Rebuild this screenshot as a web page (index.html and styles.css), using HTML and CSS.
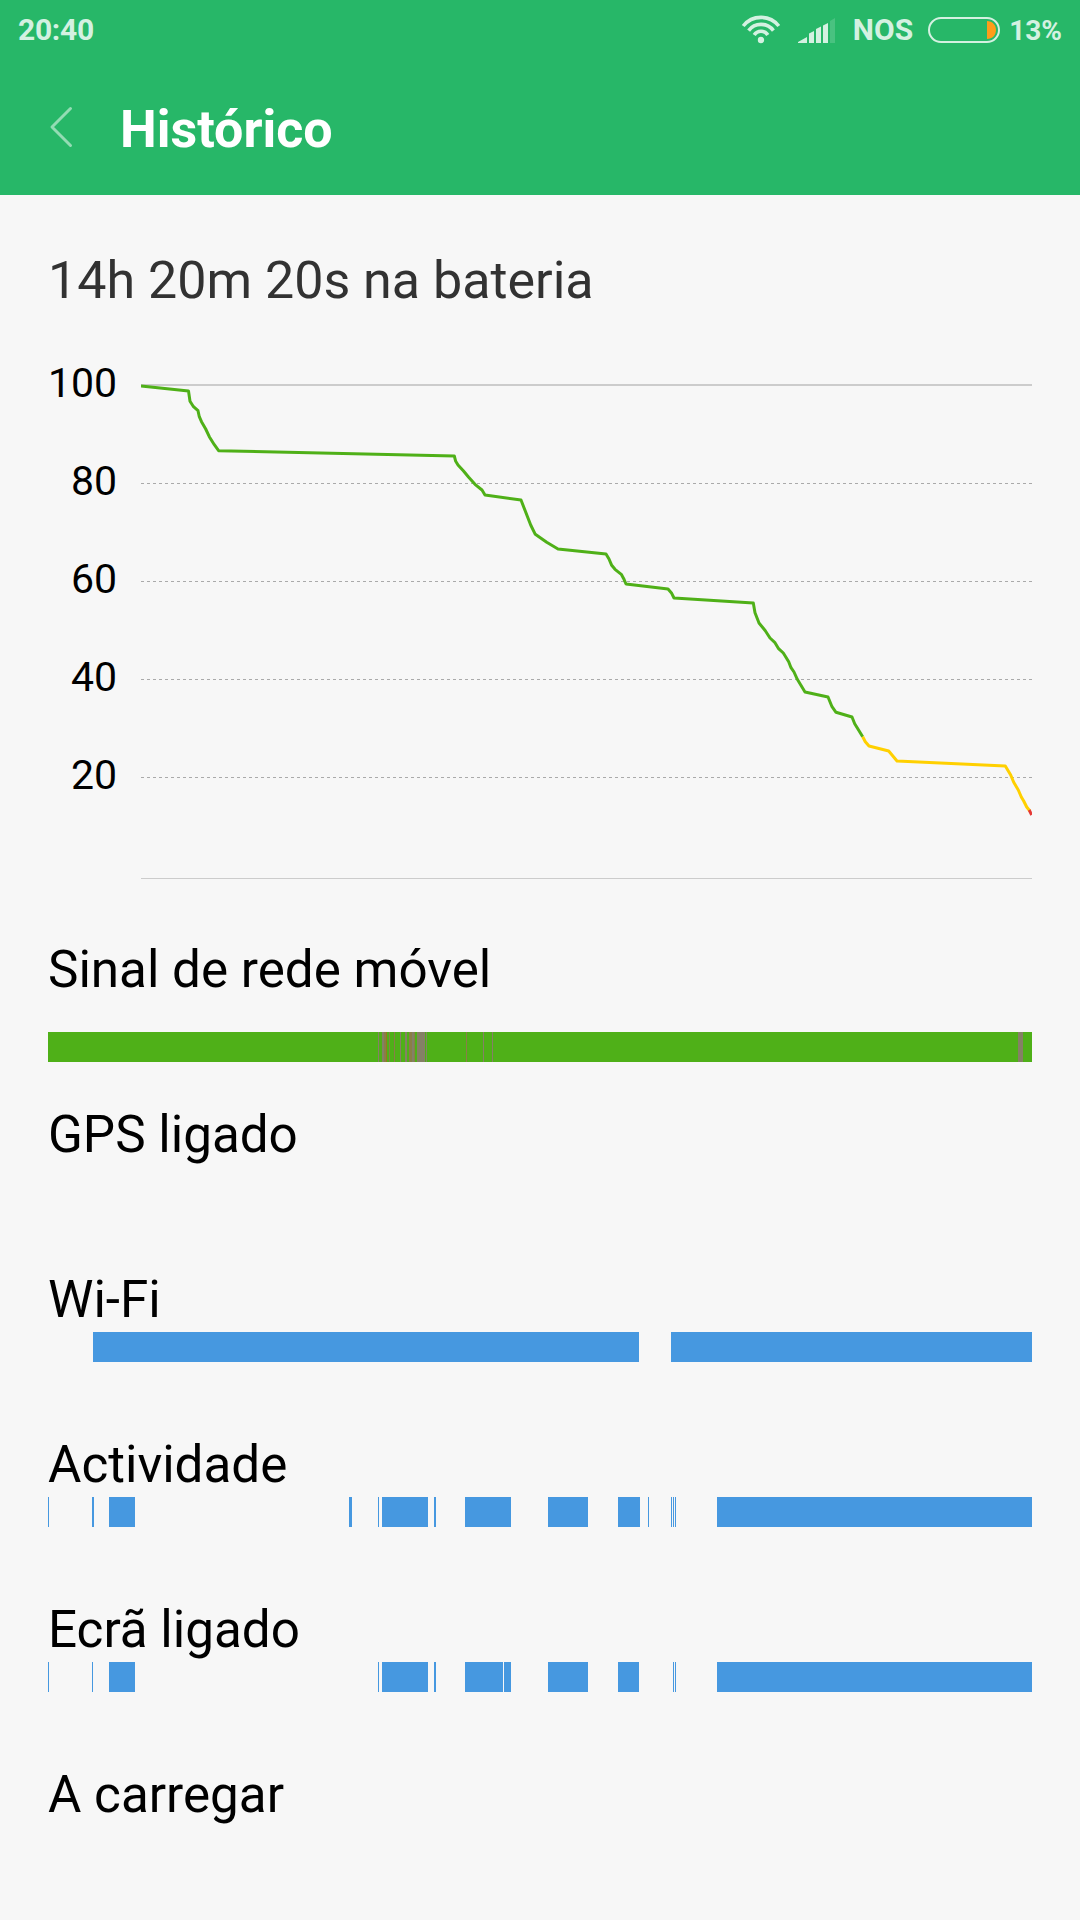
FILE: index.html
```html
<!DOCTYPE html>
<html lang="pt">
<head>
<meta charset="utf-8">
<title>Histórico</title>
<link rel="stylesheet" href="styles.css">
</head>
<body>
<header class="header">
  <div class="status">
    <span class="clock">20:40</span>
    <svg class="wifi" width="40" height="29" viewBox="0 0 40 29" fill="none" stroke="currentColor" stroke-width="3.6">
      <circle cx="20" cy="25" r="3.2" fill="currentColor" stroke="none"/>
      <path d="M13.200 20a8 8 0 0 1 13.600 0M7.600 15.600a15.500 15.500 0 0 1 24.800 0M2.200 11a22.600 22.600 0 0 1 35.600 0"/>
    </svg>
    <svg class="signal" width="37" height="26" viewBox="0 0 37 26" fill="currentColor">
      <path d="M0 25v-1l9-5v6zM11 25V15.500l5-2.500v12zM18 25V11l5-2.500V25zM25 25V7.500L30 5v20z"/>
      <path opacity=".2" d="M32 25V3l5-3v25z"/>
    </svg>
    <span class="carrier">NOS</span>
    <svg class="battery" width="72" height="26" viewBox="0 0 72 26">
      <rect x="1" y="1" width="70" height="24" rx="12" fill="none" stroke="currentColor" stroke-width="2"/>
      <path d="M59 4c5.500 0 9 4 9 9s-3.500 9-9 9z" fill="#ff9c1a"/>
    </svg>
    <span class="percent">13%</span>
  </div>
  <div class="titlebar">
    <svg class="back" width="24" height="42" viewBox="0 0 24 42"><path d="M21.500 2.500L3 21l18.500 18.500" fill="none" stroke="currentColor" stroke-width="3" stroke-linecap="round" stroke-linejoin="round"/></svg>
    <h1 class="title">Histórico</h1>
  </div>
</header>
<main class="content">
  <h2 class="summary">14h 20m 20s na bateria</h2>
  <section class="chart">
    <div class="axis"><span>100</span><span>80</span><span>60</span><span>40</span><span>20</span></div>
    <svg class="plot" width="891" height="500" viewBox="141 382 891 500">
      <path class="grid-top" d="M141 385H1032"/>
      <path class="grid-dash" d="M141 483.500H1032M141 581.500H1032M141 679.500H1032M141 777.500H1032"/>
      <path class="grid-base" d="M141 878.500H1032"/>
      <polyline class="line high" points="141,386 188.500,391 190,401.300 193.500,406.700 198,410.700 199.300,416.700 201.500,421.700 205.700,429 209.300,436.700 214.300,444.700 218.600,450.700 454.300,456 455.700,461.300 458,465 463.300,470.700 468.700,477.300 475,484.300 482,490 485,495 521,500 530.700,525 535.300,534.300 546.700,542.300 558,549 606,554 609,559 611.700,565.300 615,569.300 621.300,574.300 623.700,578.700 626,584 668,589 671.700,593.300 674,598 753.300,603 755,612.700 759,623 765.300,630.700 770,638 774.700,642.300 778.300,648.300 783.300,653 788.700,661.700 791,667.700 794,672 797.300,679.300 805,692 828,697 832,706.700 836,712.300 852,717 854.700,723.700 862.700,736.700"/>
      <polyline class="line mid" points="862.700,736.700 865.300,741.700 869,746 888.700,751 897,761 1005.300,766 1010.700,775 1013.700,782.300 1018.300,790 1021.300,797 1023.700,801 1026.700,807 1029.700,810.700"/>
      <polyline class="line low" points="1029.200,810 1031.700,815"/>
    </svg>
  </section>
  <section class="row">
    <h3 class="label">Sinal de rede móvel</h3>
    <svg class="bar bar-signal" width="984" height="30" viewBox="48 0 984 30" shape-rendering="crispEdges">
      <path class="good" d="M48 0H1032V30H48z"/>
      <path class="weak" d="M378 0h1v30h-1zM382 0h2v30h-2zM400 0h1v30h-1zM405 0h2v30h-2zM412 0h2v30h-2zM417 0h8v30h-8zM426 0h1v30h-1zM483 0h1v30h-1zM492 0h1v30h-1zM1018 0h5v30h-5z"/>
      <path class="fair" d="M384 0h2v30h-2zM389 0h1v30h-1zM394 0h1v30h-1zM409 0h3v30h-3zM414 0h1v30h-1zM466 0h1v30h-1z"/>
      <path class="poor" d="M386 0h1v30h-1z"/>
    </svg>
  </section>
  <section class="row"><h3 class="label">GPS ligado</h3></section>
  <section class="row">
    <h3 class="label">Wi-Fi</h3>
    <svg class="bar" width="984" height="30" viewBox="48 0 984 30" shape-rendering="crispEdges"><path d="M93 0H639V30H93zM671 0H1032V30H671z"/></svg>
  </section>
  <section class="row">
    <h3 class="label">Actividade</h3>
    <svg class="bar" width="984" height="30" viewBox="48 0 984 30" shape-rendering="crispEdges"><path d="M48 0h1v30h-1zM92 0h2v30h-2zM109 0h26v30h-26zM349 0h3v30h-3zM378 0h1v30h-1zM382 0h46v30h-46zM434 0h2v30h-2zM465 0h46v30h-46zM548 0h40v30h-40zM618 0h22v30h-22zM648 0h1v30h-1zM671 0h1v30h-1zM673 0h1v30h-1zM675 0h1v30h-1zM717 0h315v30h-315z"/></svg>
  </section>
  <section class="row">
    <h3 class="label">Ecrã ligado</h3>
    <svg class="bar" width="984" height="30" viewBox="48 0 984 30" shape-rendering="crispEdges"><path d="M48 0h1v30h-1zM92 0h1v30h-1zM109 0h26v30h-26zM378 0h1v30h-1zM382 0h46v30h-46zM434 0h2v30h-2zM465 0h38v30h-38zM504 0h7v30h-7zM548 0h40v30h-40zM618 0h21v30h-21zM673 0h1v30h-1zM675 0h1v30h-1zM717 0h315v30h-315z"/></svg>
  </section>
  <section class="row"><h3 class="label">A carregar</h3></section>
</main>
</body>
</html>
```
FILE: styles.css
```css
* { box-sizing: border-box; }
body {
  margin: 0;
  width: 1080px;
  height: 1920px;
  overflow: hidden;
  background: #f7f7f7;
  color: #000;
  font-family: Roboto, sans-serif;
}
h1, h2, h3 { margin: 0; font-weight: 400; }
svg { display: block; flex: none; }

.header { height: 195px; background: #27b768; color: #fff; }
.status {
  display: flex;
  height: 60px;
  padding: 0 18px;
  color: #d4f1e1;
  font-size: 30px;
  font-weight: 700;
  line-height: 60px;
}
.clock { margin-right: auto; letter-spacing: -0.3px; }
.wifi { margin: 15px 17px 0 0; }
.signal { margin: 18px 18px 0 0; }
.battery { margin: 17px 9px 0 15px; }
.percent { font-size: 28px; line-height: 61px; }
.titlebar { display: flex; align-items: flex-start; height: 135px; padding: 0 49px; }
.back { margin: 46px 47px 0 0; color: #93dcb4; }
.title { margin-top: 40px; font-size: 52px; line-height: 60px; font-weight: 700; }

.content { padding: 55px 48px 0; }
.summary { height: 108px; font-size: 52px; line-height: 61px; color: #323232; }
.chart { display: flex; justify-content: space-between; height: 569px; }
.axis { display: flex; flex-direction: column; width: 69px; font-size: 41px; line-height: 98px; text-align: right; margin-top: -24px; }
.plot { margin-top: 24px; }
.grid-top { stroke: #ccc; stroke-width: 2; }
.grid-dash { stroke: #aaa; stroke-width: 1; stroke-dasharray: 3 3; }
.grid-base { stroke: #ccc; stroke-width: 1; }
.line { fill: none; stroke-width: 3; stroke-linejoin: round; }
.high { stroke: #4fb018; }
.mid { stroke: #ffd000; }
.low { stroke: #e53935; }

.row { height: 165px; padding-top: 12px; }
.label { height: 63px; font-size: 51.2px; line-height: 61px; }
.bar { fill: #4698e0; }
.bar-signal { margin-top: 30px; }
.good { fill: #4fb018; }
.weak { fill: #858066; }
.fair { fill: #8a7e48; }
.poor { fill: #96781e; }
```
